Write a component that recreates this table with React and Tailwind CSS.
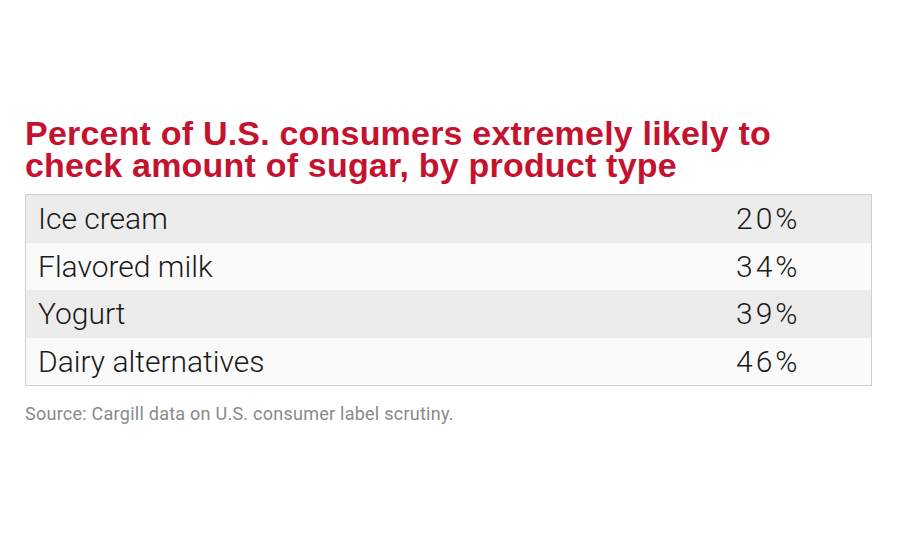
export default function App() {
  const rows = [
    ["Ice cream", "20%"],
    ["Flavored milk", "34%"],
    ["Yogurt", "39%"],
    ["Dairy alternatives", "46%"],
  ];
  return (
    <div className="w-[900px] h-[550px] bg-white overflow-hidden">
      <div className="pt-[117px] pl-[25px]">
        <h1 className="text-[#c4122f] font-bold text-[34px] leading-[32px] tracking-[0.2px]" style={{ fontFamily: '"Liberation Sans", Arial, sans-serif' }}>
          Percent of U.S. consumers extremely likely to
          <br />
          check amount of sugar, by product type
        </h1>
        <div className="mt-[13px] w-[847px] border border-[#cfcfcf]">
          {rows.map(([label, val], i) => (
            <div
              key={label}
              className={`h-[47.5px] flex items-center text-[30px] text-[#1a1a1a] font-light ${i % 2 === 0 ? "bg-[#ececec]" : "bg-[#fafafa]"}`}
              style={{ fontFamily: 'Roboto, "Liberation Sans", sans-serif' }}
            >
              <span className="pl-[12px] flex-1">{label}</span>
              <span className="w-[135px] tracking-[3px]">{val}</span>
            </div>
          ))}
        </div>
        <p className="mt-[14px] text-[18px] text-[#8a8a8a] tracking-[0.25px]" style={{ fontFamily: 'Roboto, "Liberation Sans", sans-serif' }}>
          Source: Cargill data on U.S. consumer label scrutiny.
        </p>
      </div>
    </div>
  );
}
